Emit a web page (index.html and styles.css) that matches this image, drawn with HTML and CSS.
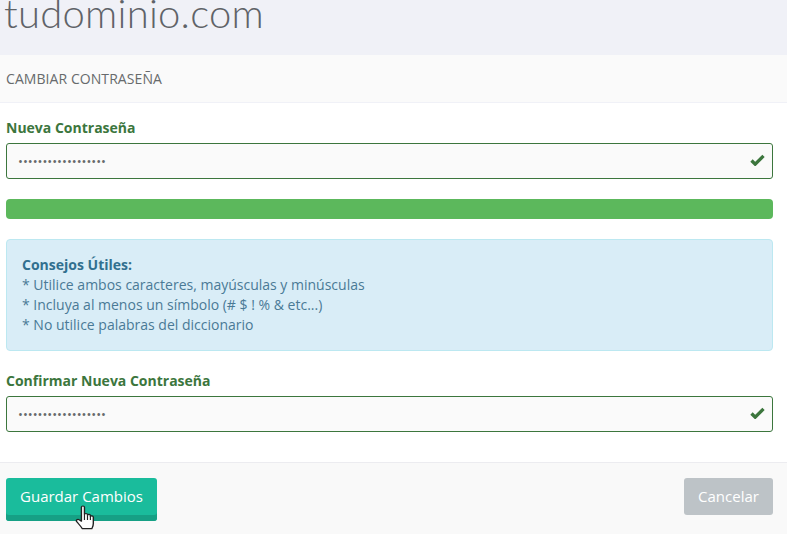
FILE: index.html
```html
<!DOCTYPE html>
<html lang="es">
<head>
<meta charset="utf-8">
<title>Cambiar contraseña</title>
<link rel="stylesheet" href="styles.css">
</head>
<body>
<header class="site-header"><h1 class="domain">tudominio.com</h1></header>
<main class="panel">
  <div class="panel-heading">CAMBIAR CONTRASEÑA</div>
  <form class="panel-body">
    <div class="field">
      <label class="label">Nueva Contraseña</label>
      <div class="input-wrap">
        <input class="input" type="password" value="123456789012345678">
        <svg class="check" viewBox="0 0 16 13" aria-hidden="true"><path d="M1.500 7 5.500 11 14.500 2" fill="none" stroke="#3c763d" stroke-width="3.600"/></svg>
      </div>
    </div>
    <div class="progress"></div>
    <div class="tips">
      <strong class="tips-title">Consejos Útiles:</strong>
      <div>* Utilice ambos caracteres, mayúsculas y minúsculas</div>
      <div>* Incluya al menos un símbolo (# $ ! % &amp; etc...)</div>
      <div>* No utilice palabras del diccionario</div>
    </div>
    <div class="field">
      <label class="label">Confirmar Nueva Contraseña</label>
      <div class="input-wrap">
        <input class="input" type="password" value="123456789012345678">
        <svg class="check" viewBox="0 0 16 13" aria-hidden="true"><path d="M1.500 7 5.500 11 14.500 2" fill="none" stroke="#3c763d" stroke-width="3.600"/></svg>
      </div>
    </div>
  </form>
  <footer class="panel-footer">
    <div class="btn-holder">
      <button class="btn btn-save" type="button">Guardar Cambios</button>
      <svg class="cursor" viewBox="0 0 18 26" preserveAspectRatio="none" aria-hidden="true"><path d="M5.500 2.200c0-1.600 2.600-1.600 2.600 0v7.300c.2-1.400 2.600-1.300 2.600.2v.6c.3-1.300 2.500-1.100 2.500.4v.9c.4-1.100 2.500-.9 2.500.7v6.200c0 2.400-.6 3.400-1.300 5.200H6.300c-1.200-2.300-3-4.500-4.800-7-1-1.500.7-3 2.100-1.900L5.500 16.200Z" fill="#fff" stroke="#222" stroke-width="1.200" stroke-linejoin="round"/><path d="M8.100 10v5M10.700 10.500v4.500M13.200 11.500v3.500" stroke="#222" fill="none"/></svg>
    </div>
    <button class="btn btn-cancel" type="button">Cancelar</button>
  </footer>
</main>
</body>
</html>
```
FILE: styles.css
```css
* { box-sizing: border-box; }
html, body { margin: 0; height: 534px; overflow: hidden; }
body { font-family: "Open Sans", sans-serif; font-size: 14px; color: #676a6c; background: #fff; }
.site-header { height: 55px; background: #f0f1f7; padding-left: 4px; overflow: hidden; }
.domain { margin: 0; font-family: Lato, sans-serif; font-weight: 300; font-size: 40px; line-height: 27px; color: #5f6368; letter-spacing: 0.25px; }
.panel { display: flex; flex-direction: column; height: 479px; }
.panel-heading { height: 48px; padding: 0 6px; line-height: 47px; background: #fafafa; border-bottom: 1px solid #f0f1f7; letter-spacing: 0.07px; }
.panel-body { height: 359px; padding: 16px 14px 0 6px; }
.label { display: block; height: 24px; line-height: 18px; font-weight: 700; color: #3c763d; }
.input-wrap { position: relative; }
.input { display: block; width: 100%; height: 36px; padding: 0 11px; background: #fafafa; border: 1px solid #3c763d; border-radius: 3px; font-family: inherit; font-size: 13px; color: #676a6c; outline: none; }
.check { position: absolute; right: 8px; top: 11px; width: 15px; height: 12px; }
.progress { height: 20px; margin-top: 20px; background: #5cb85c; border-radius: 4px; }
.tips { height: 112px; margin-top: 20px; padding: 15px; background: #d9edf7; border: 1px solid #bce8f1; border-radius: 4px; color: #4a7a96; line-height: 20px; }
.tips-title { color: #31708f; font-weight: 700; }
.tips + .field { margin-top: 21px; }
.panel-footer { flex: 1; display: flex; justify-content: space-between; align-items: flex-start; padding: 15px 14px 0 6px; background: #f9f9f9; border-top: 1px solid #ececf0; }
.btn-holder { position: relative; }
.btn { border: 0; border-radius: 3px; font-family: inherit; font-size: 15px; color: #fff; padding: 0; }
.btn-save { display: block; width: 151px; height: 43px; padding-bottom: 8px; background: #1abc9c; box-shadow: inset 0 -6px 0 #16a085; }
.btn-cancel { width: 89px; height: 37px; padding-bottom: 1px; background: #bdc3c7; }
.cursor { position: absolute; left: 69px; top: 27px; width: 21px; height: 26px; }
```
